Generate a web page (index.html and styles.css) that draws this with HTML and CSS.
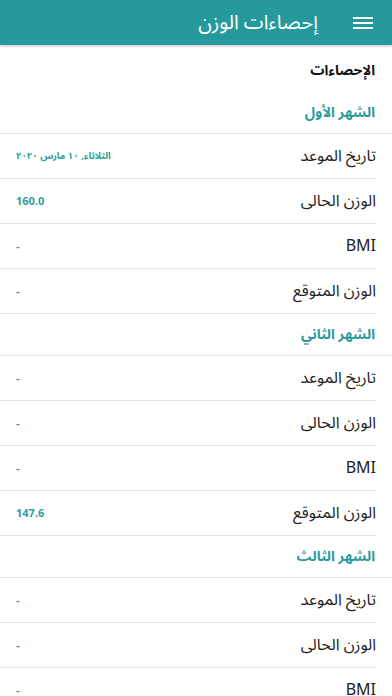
FILE: index.html
```html
<!DOCTYPE html>
<html lang="ar" dir="rtl">
<head>
<meta charset="utf-8">
<title>إحصاءات الوزن</title>
<link rel="stylesheet" href="styles.css">
</head>
<body>
<header class="appbar">
  <span class="menu" aria-label="menu">
    <svg width="20" height="14" viewBox="0 0 20 14"><rect x="0" y="1" width="20" height="2" fill="#fff"/><rect x="0" y="6" width="20" height="2" fill="#fff"/><rect x="0" y="11" width="20" height="2" fill="#fff"/></svg>
  </span>
  <h1 class="title">إحصاءات الوزن</h1>
</header>
<main class="content">
  <div class="page-title">الإحصاءات</div>

  <div class="section">الشهر الأول</div>
  <div class="row"><span class="label">تاريخ الموعد</span><span class="value date">الثلاثاء, ١٠ مارس ٢٠٢٠</span></div>
  <div class="row"><span class="label">الوزن الحالى</span><span class="value">160.0</span></div>
  <div class="row"><span class="label">BMI</span><span class="value">-</span></div>
  <div class="row"><span class="label">الوزن المتوقع</span><span class="value">-</span></div>

  <div class="section">الشهر الثاني</div>
  <div class="row"><span class="label">تاريخ الموعد</span><span class="value">-</span></div>
  <div class="row"><span class="label">الوزن الحالى</span><span class="value">-</span></div>
  <div class="row"><span class="label">BMI</span><span class="value">-</span></div>
  <div class="row"><span class="label">الوزن المتوقع</span><span class="value">147.6</span></div>

  <div class="section">الشهر الثالث</div>
  <div class="row"><span class="label">تاريخ الموعد</span><span class="value">-</span></div>
  <div class="row"><span class="label">الوزن الحالى</span><span class="value">-</span></div>
  <div class="row"><span class="label">BMI</span><span class="value">-</span></div>
  <div class="row"><span class="label">الوزن المتوقع</span><span class="value">-</span></div>
</main>
</body>
</html>
```

FILE: styles.css
```css
* { box-sizing: border-box; }
html, body { margin: 0; padding: 0; }
body {
  width: 392px;
  height: 696px;
  overflow: hidden;
  background: #fff;
  font-family: "Noto Sans Arabic", "DejaVu Sans", "Noto Sans", sans-serif;
  color: #222;
}
.appbar {
  height: 45px;
  background: #26999c;
  display: flex;
  align-items: center;
  padding-right: 19px;
  gap: 35px;
  box-shadow: 0 1px 3px rgba(0,0,0,0.25);
  position: relative;
  z-index: 1;
}
.menu { display: flex; align-items: center; width: 20px; height: 14px; margin-top: 1px; }
.menu svg { display: block; }
.title {
  margin: 0;
  font-size: 20px;
  font-weight: normal;
  color: #fff;
  line-height: 1;
}
.page-title {
  height: 47px;
  display: flex;
  align-items: center;
  padding-right: 17px;
  padding-top: 3px;
  font-size: 14px;
  font-weight: bold;
  color: #111;
}
.section {
  height: 42px;
  display: flex;
  align-items: center;
  padding-right: 17px;
  font-size: 14px;
  font-weight: bold;
  color: #2a9a9c;
  border-bottom: 1px solid #e4e4e4;
}
.row {
  height: 45px;
  display: flex;
  align-items: center;
  justify-content: space-between;
  margin-right: 16px;
  padding-left: 16px;
  border-bottom: 1px solid #e4e4e4;
}
.label {
  font-size: 16px;
  color: #222;
}
.value {
  font-size: 11px;
  font-weight: bold;
  color: #2f9c9d;
}
.value.date {
  font-size: 9.5px;
}
```
